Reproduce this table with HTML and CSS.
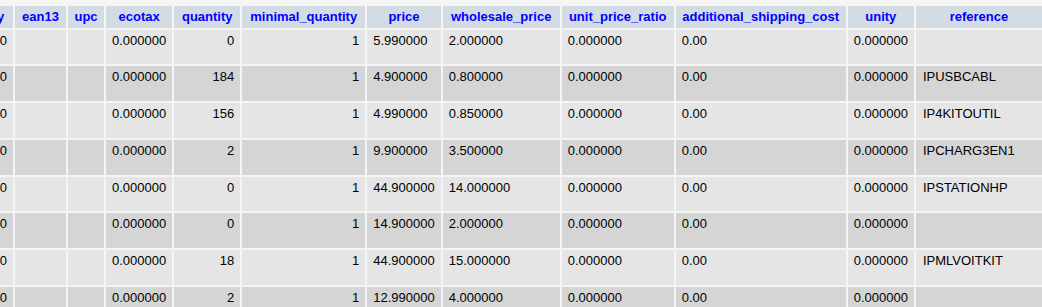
FILE: index.html
```html
<!DOCTYPE html>
<html>
<head>
<meta charset="utf-8">
<link rel="stylesheet" href="styles.css">
</head>
<body>
<div class="viewport">
<table class="data">
<thead>
<tr>
<th class="c-online">online_only</th>
<th class="c-ean">ean13</th>
<th class="c-upc">upc</th>
<th class="c-eco">ecotax</th>
<th class="c-qty">quantity</th>
<th class="c-minq">minimal_quantity</th>
<th class="c-price">price</th>
<th class="c-whole">wholesale_price</th>
<th class="c-upr">unit_price_ratio</th>
<th class="c-asc">additional_shipping_cost</th>
<th class="c-unity">unity</th>
<th class="c-ref">reference</th>
<th class="c-sref">supplier_reference</th>
</tr>
</thead>
<tbody>
<tr class="odd"><td class="r">0</td><td></td><td></td><td class="r">0.000000</td><td class="r">0</td><td class="r">1</td><td>5.990000</td><td>2.000000</td><td>0.000000</td><td>0.00</td><td class="r">0.000000</td><td class="ref"></td><td></td></tr>
<tr class="even"><td class="r">0</td><td></td><td></td><td class="r">0.000000</td><td class="r">184</td><td class="r">1</td><td>4.900000</td><td>0.800000</td><td>0.000000</td><td>0.00</td><td class="r">0.000000</td><td class="ref">IPUSBCABL</td><td></td></tr>
<tr class="odd"><td class="r">0</td><td></td><td></td><td class="r">0.000000</td><td class="r">156</td><td class="r">1</td><td>4.990000</td><td>0.850000</td><td>0.000000</td><td>0.00</td><td class="r">0.000000</td><td class="ref">IP4KITOUTIL</td><td></td></tr>
<tr class="even"><td class="r">0</td><td></td><td></td><td class="r">0.000000</td><td class="r">2</td><td class="r">1</td><td>9.900000</td><td>3.500000</td><td>0.000000</td><td>0.00</td><td class="r">0.000000</td><td class="ref">IPCHARG3EN1</td><td></td></tr>
<tr class="odd"><td class="r">0</td><td></td><td></td><td class="r">0.000000</td><td class="r">0</td><td class="r">1</td><td>44.900000</td><td>14.000000</td><td>0.000000</td><td>0.00</td><td class="r">0.000000</td><td class="ref">IPSTATIONHP</td><td></td></tr>
<tr class="even"><td class="r">0</td><td></td><td></td><td class="r">0.000000</td><td class="r">0</td><td class="r">1</td><td>14.900000</td><td>2.000000</td><td>0.000000</td><td>0.00</td><td class="r">0.000000</td><td class="ref"></td><td></td></tr>
<tr class="odd"><td class="r">0</td><td></td><td></td><td class="r">0.000000</td><td class="r">18</td><td class="r">1</td><td>44.900000</td><td>15.000000</td><td>0.000000</td><td>0.00</td><td class="r">0.000000</td><td class="ref">IPMLVOITKIT</td><td></td></tr>
<tr class="even"><td class="r">0</td><td></td><td></td><td class="r">0.000000</td><td class="r">2</td><td class="r">1</td><td>12.990000</td><td>4.000000</td><td>0.000000</td><td>0.00</td><td class="r">0.000000</td><td class="ref"></td><td></td></tr>
</tbody>
</table>
</div>
</body>
</html>
```

FILE: styles.css
```css
html, body {
  margin: 0;
  padding: 0;
  background: #f5f5f5;
  overflow: hidden;
}

.viewport {
  width: 1042px;
  height: 307px;
  overflow: hidden;
  padding-top: 4px;
  box-sizing: border-box;
}

.data {
  table-layout: fixed;
  border-collapse: separate;
  border-spacing: 2px;
  margin-left: -79px;
  width: max-content;
  font-family: "Liberation Sans", Arial, sans-serif;
  font-size: 13px;
  color: #000;
}

.data th,
.data td {
  box-sizing: border-box;
  padding: 2px 6px;
  vertical-align: top;
  white-space: nowrap;
  overflow: hidden;
  line-height: 15px;
}

.data th {
  background: #d3dce3;
  color: #0000ff;
  font-weight: bold;
  text-align: center;
  height: 21.5px;
  padding-top: 3px;
}

.data td {
  height: 34.75px;
  padding-top: 3px;
  text-align: left;
}

.data td.r { text-align: right; padding-right: 6px; }
.data td.ref { padding-left: 7px; }

.odd td { background: #e5e5e5; }
.even td { background: #d5d5d5; }

.c-online { width: 90px; }
.c-ean { width: 51px; }
.c-upc { width: 36px; }
.c-eco { width: 65px; }
.c-qty { width: 66px; }
.c-minq { width: 123px; }
.c-price { width: 73px; }
.c-whole { width: 117px; }
.c-upr { width: 112px; }
.c-asc { width: 170px; }
.c-unity { width: 66px; }
.c-ref { width: 126px; }
.c-sref { width: 140px; }
```
